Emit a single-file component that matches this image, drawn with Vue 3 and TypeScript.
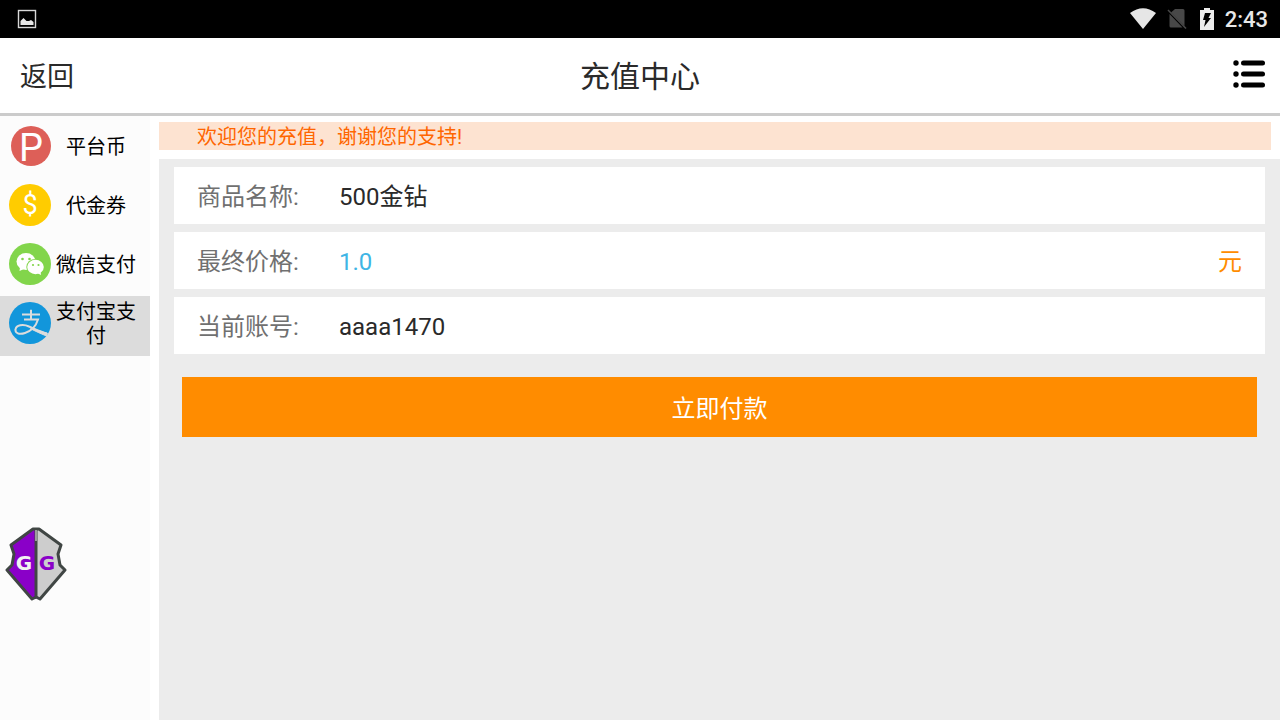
<script setup lang="ts">
import { ref } from 'vue'

interface Method {
  id: 'coin' | 'voucher' | 'wechat' | 'alipay'
  label: string
}

interface Field {
  label: string
  value: string
  accent?: boolean
  unit?: string
}

const methods: Method[] = [
  { id: 'coin', label: '平台币' },
  { id: 'voucher', label: '代金券' },
  { id: 'wechat', label: '微信支付' },
  { id: 'alipay', label: '支付宝支付' },
]

const fields: Field[] = [
  { label: '商品名称:', value: '500金钻' },
  { label: '最终价格:', value: '1.0', accent: true, unit: '元' },
  { label: '当前账号:', value: 'aaaa1470' },
]

const selected = ref<Method['id']>('alipay')
</script>

<template>
  <div class="screen">
    <div class="status">
      <svg class="picture" width="20" height="20" viewBox="0 0 20 20">
        <rect x="1.5" y="1.5" width="17" height="17" fill="none" stroke="#d8d8d8" stroke-width="1.4" />
        <path d="M3.500 16V12L6.500 9L9.500 12H12L14 11L16.500 13V16Z" fill="#e8e8e8" />
      </svg>
      <div class="indicators">
        <svg width="26" height="22" viewBox="0 0 26 22">
          <path d="M0 5Q13-4.500 26 5L13 21Z" fill="#e6e6e6" />
        </svg>
        <svg width="22" height="22" viewBox="0 0 22 22">
          <path d="M8 1H16Q17.500 1 17.500 2.500V18L4 4.500ZM2.500 6L15.500 19.500H4Q2.500 19.500 2.500 18Z" fill="#484848" />
          <path d="M1 2L19 20.500" stroke="#484848" stroke-width="1.500" />
        </svg>
        <svg width="14" height="22" viewBox="0 0 14 22">
          <path d="M4 0H10V2H14V22H0V2H4Z" fill="#ededed" />
          <path d="M5 5H11L8.500 10H11L4 19L5.500 12H3Z" fill="#000" />
        </svg>
        <span class="clock">2:43</span>
      </div>
    </div>

    <header class="topbar">
      <button class="back" type="button">返回</button>
      <h1>充值中心</h1>
      <button class="menu" type="button" aria-label="菜单">
        <svg width="32" height="28" viewBox="0 0 32 28">
          <g v-for="y in [3, 14, 25]" :key="y">
            <circle cx="3" :cy="y" r="2.700" />
            <rect x="8" :y="y - 2.500" width="24" height="5" rx="2.500" />
          </g>
        </svg>
      </button>
    </header>

    <div class="body">
      <nav class="methods">
        <button
          v-for="m in methods"
          :key="m.id"
          type="button"
          class="method"
          :class="{ active: selected === m.id }"
          @click="selected = m.id"
        >
          <svg v-if="m.id === 'coin'" width="42" height="42" viewBox="0 0 42 42">
            <circle cx="22" cy="21" r="20" fill="#dd5f58" />
            <text x="22" y="36" text-anchor="middle" class="coin-mark">P</text>
          </svg>
          <svg v-else-if="m.id === 'voucher'" width="42" height="42" viewBox="0 0 42 42">
            <circle cx="21" cy="21" r="21" fill="#ffcc00" />
            <text x="21" y="30" text-anchor="middle" class="voucher-mark">$</text>
          </svg>
          <svg v-else-if="m.id === 'wechat'" width="42" height="42" viewBox="0 0 42 42">
            <circle cx="21" cy="21" r="21" fill="#82d54b" />
            <ellipse cx="17" cy="18.500" rx="9.500" ry="8.500" fill="#fff" />
            <path d="M11 24L10.500 28L15 26Z" fill="#fff" />
            <ellipse cx="26.500" cy="24" rx="9.200" ry="8" fill="#82d54b" />
            <ellipse cx="26.500" cy="24" rx="8.300" ry="7.200" fill="#fff" />
            <path d="M28 30L32 32L31.500 28Z" fill="#fff" />
            <g fill="#82d54b">
              <circle cx="13.500" cy="16" r="1.300" />
              <circle cx="20.500" cy="16" r="1.300" />
              <circle cx="24" cy="22" r="1.100" />
              <circle cx="29.500" cy="22" r="1.100" />
            </g>
          </svg>
          <svg v-else width="42" height="42" viewBox="0 0 42 42">
            <circle cx="21" cy="21" r="21" fill="#1296db" />
            <path
              d="M13 12.500H31M22 8V17.500M15 17.500H29C27 24 22 29 16 31C10 33 6 31 6.500 27.500C7 23 14 21.500 20 24.500C26 27 31 29.500 38 31.500"
              fill="none"
              stroke="#dcdcdc"
              stroke-width="2"
            />
            <path d="M22 7.500V17M22 25.500Q30 29 38.500 31.500L37.500 34Q30 31 22 27Z" fill="#dcdcdc" stroke="#dcdcdc" />
          </svg>
          <span>{{ m.label }}</span>
        </button>
      </nav>

      <main>
        <p class="notice">欢迎您的充值，谢谢您的支持!</p>
        <section class="order">
          <dl>
            <div v-for="f in fields" :key="f.label" class="field">
              <dt>{{ f.label }}</dt>
              <dd :class="{ accent: f.accent }">{{ f.value }}</dd>
              <dd v-if="f.unit" class="unit">{{ f.unit }}</dd>
            </div>
          </dl>
          <button class="pay" type="button">立即付款</button>
        </section>
      </main>
    </div>

    <svg class="floater" width="62" height="74" viewBox="0 0 62 74">
      <path d="M31 2H28L6 18L9 27L7 38L2 43L27 72H31Z" fill="#8a00c8" />
      <path d="M31 2H34L56 18L53 27L55 38L60 43L35 72H31Z" fill="#cdcdcd" />
      <path d="M28 2L6 18L9 27L7 38L2 43L27 72L31 70L35 72L60 43L55 38L53 27L56 18L34 2Z" fill="none" stroke="#404644" stroke-width="3" stroke-linejoin="round" />
      <path d="M31 3V71" stroke="#404644" stroke-width="3" />
      <path d="M31 3V14" stroke="#b8b8b8" stroke-width="1.500" />
      <text x="19" y="43" text-anchor="middle" fill="#f2f2f2">G</text>
      <text x="42" y="43" text-anchor="middle" fill="#8a00c8">G</text>
    </svg>
  </div>
</template>

<style>
html,
body,
#app {
  height: 100%;
}
</style>

<style scoped>
.screen {
  position: relative;
  display: flex;
  flex-direction: column;
  min-height: 100%;
  background: #fff;
  color: #2a2a2a;
  font-family: Roboto, "Noto Sans CJK SC", sans-serif;
}

button {
  border: 0;
  padding: 0;
  background: none;
  color: inherit;
  font: inherit;
  cursor: pointer;
}

svg {
  display: block;
  flex: none;
}

.status {
  display: flex;
  align-items: center;
  justify-content: space-between;
  height: 38px;
  padding: 0 12px 0 17px;
  background: #000;
}

.indicators {
  display: flex;
  align-items: center;
  gap: 11px;
}

.clock {
  color: #e8e8e8;
  font-size: 22px;
  font-weight: 500;
}

.topbar {
  display: grid;
  grid-template-columns: 1fr auto 1fr;
  align-items: center;
  height: 71px;
  padding: 0 15px 4px;
  border-bottom: 3px solid #cbcbcb;
}

.back {
  justify-self: start;
  padding: 2px 0 0 5px;
  font-size: 27px;
}

h1 {
  margin: 0;
  font-size: 30px;
  font-weight: 400;
}

.menu {
  justify-self: end;
}

.body {
  display: flex;
  flex: 1;
}

.methods {
  flex: none;
  width: 150px;
  padding-top: 3px;
  background: #fcfcfc;
}

.method {
  display: flex;
  align-items: center;
  gap: 3px;
  width: 100%;
  height: 59px;
  padding: 0 12px 5px 9px;
  color: #000;
  font-size: 20px;
  line-height: 24px;
}

.method.active {
  height: 60px;
  padding-bottom: 6px;
  background: #dcdcdc;
}

.method span {
  flex: 1;
  padding-top: 2px;
}

.coin-mark {
  fill: #fff;
  font-size: 38px;
}

.voucher-mark {
  fill: #fff;
  font-size: 27px;
}

main {
  display: flex;
  flex: 1;
  flex-direction: column;
  gap: 9px;
  padding: 6px 0 0 9px;
}

.notice {
  margin: 0 9px 0 0;
  padding: 2px 0 0 38px;
  background: #fde3d1;
  color: #ff6600;
  font-size: 20px;
  line-height: 26px;
}

.order {
  flex: 1;
  padding: 8px 15px;
  background: #ececec;
}

dl {
  display: grid;
  gap: 8px;
  margin: 0;
}

.field {
  display: flex;
  align-items: center;
  height: 55px;
  padding: 2px 23px 0;
  background: #fff;
  font-size: 24px;
  line-height: 28px;
}

dt {
  width: 142px;
  color: #707070;
}

dd {
  margin: 0;
}

.accent {
  color: #3fb5e5;
}

.unit {
  margin-left: auto;
  color: #ff8c00;
}

.pay {
  display: block;
  width: calc(100% - 16px);
  height: 60px;
  margin: 23px 8px 0;
  padding-bottom: 2px;
  background: #ff8c00;
  color: #fff;
  font-size: 24px;
}

.floater {
  position: absolute;
  top: 527px;
  left: 5px;
  font: bold 20px "DejaVu Sans", sans-serif;
}
</style>
